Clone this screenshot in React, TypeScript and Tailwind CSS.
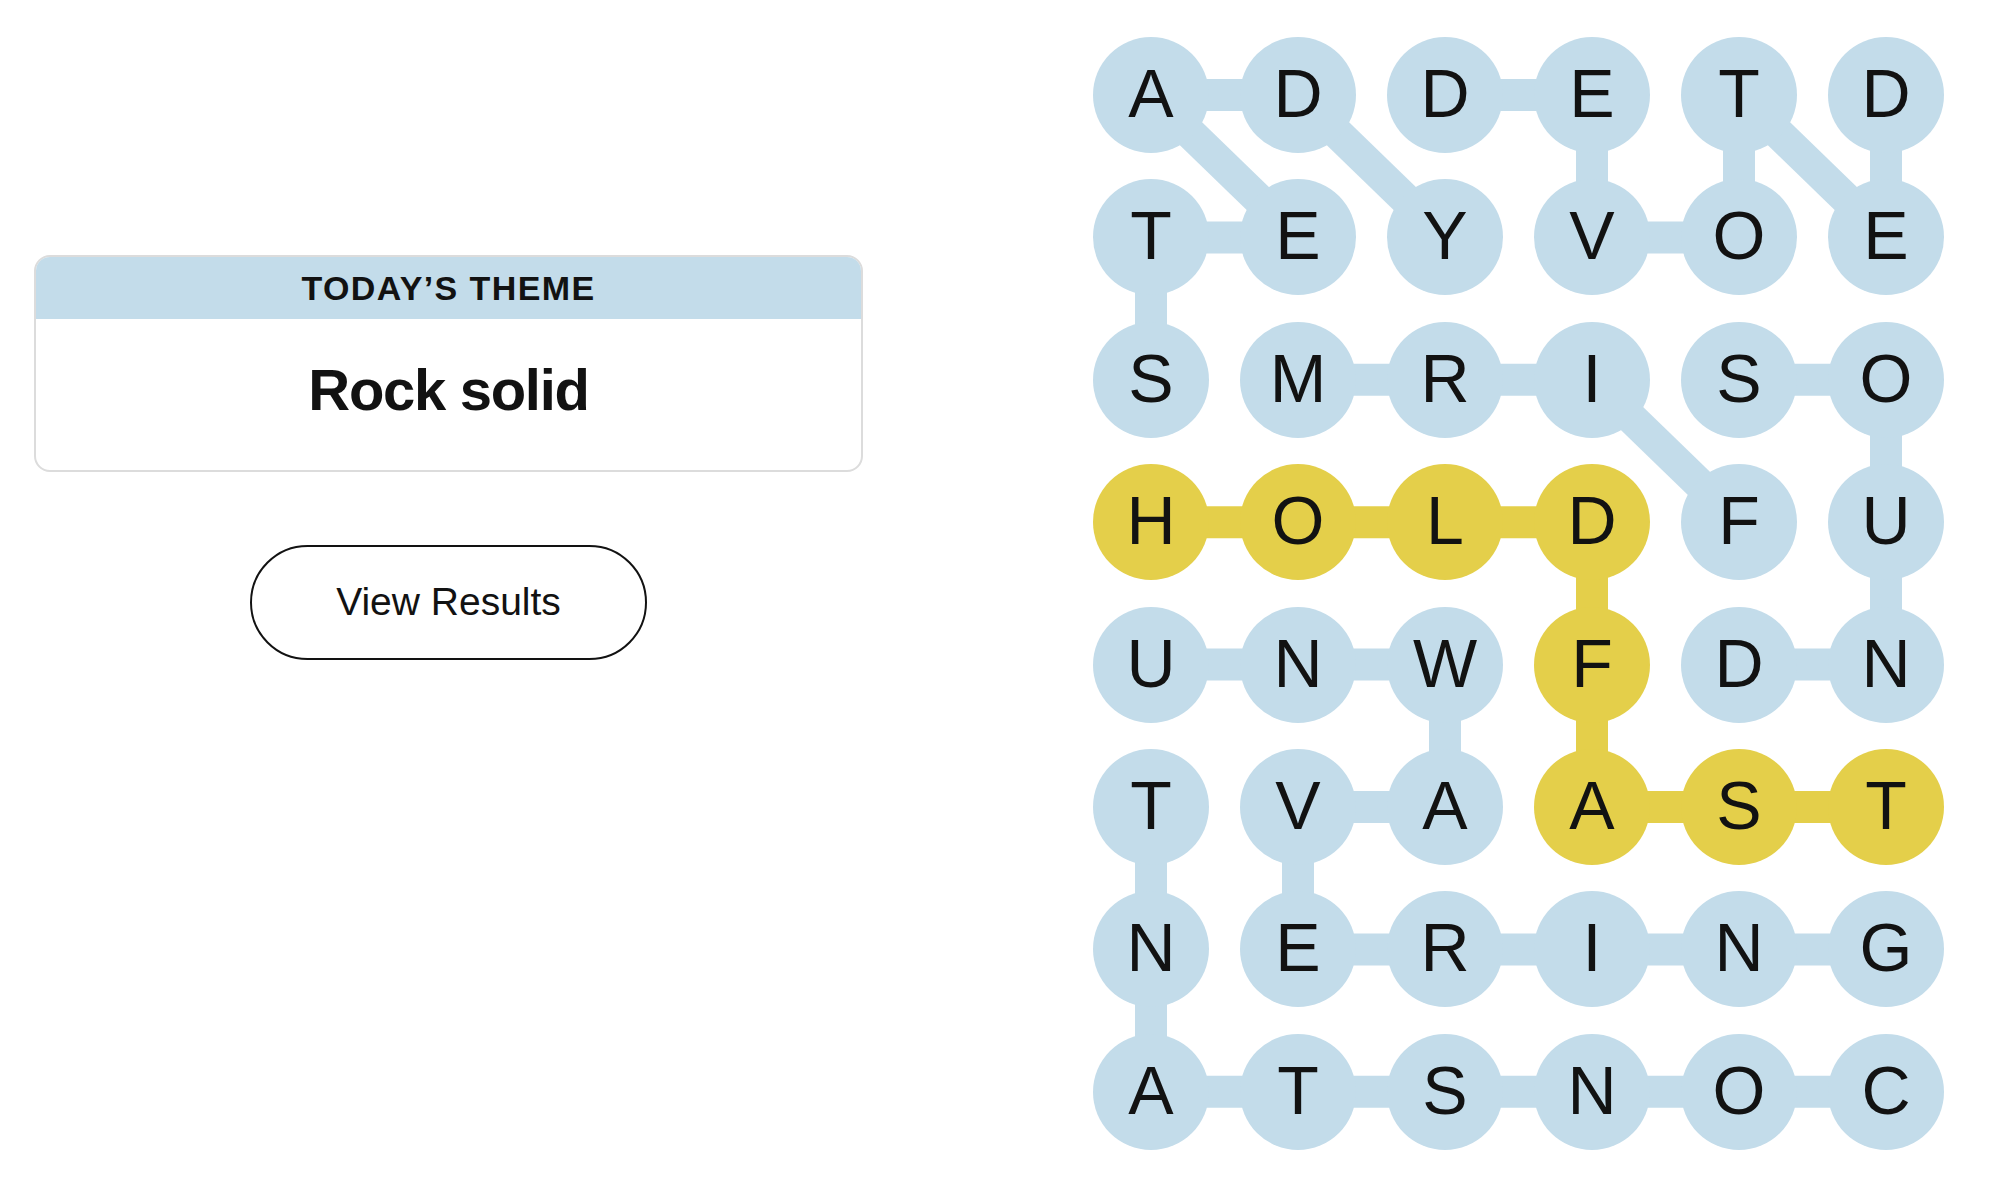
import React from 'react';

const ROWS = ['ADDETD', 'TEYVOE', 'SMRISO', 'HOLDFU', 'UNWFDN', 'TVAAST', 'NERING', 'ATSNOC'];

// cells of the spangram
const YELLOW = new Set(['3-0', '3-1', '3-2', '3-3', '4-3', '5-3', '5-4', '5-5']);

// [r1, c1, r2, c2]
const LINKS: number[][] = [
  [0, 0, 0, 1], [0, 0, 1, 1], [1, 0, 1, 1], [0, 1, 1, 2],
  [0, 2, 0, 3], [0, 3, 1, 3], [0, 4, 1, 4], [0, 4, 1, 5], [0, 5, 1, 5], [1, 3, 1, 4],
  [1, 0, 2, 0], [2, 1, 2, 2], [2, 2, 2, 3], [2, 3, 3, 4], [2, 4, 2, 5], [2, 5, 3, 5], [3, 5, 4, 5],
  [3, 0, 3, 1], [3, 1, 3, 2], [3, 2, 3, 3], [3, 3, 4, 3], [4, 3, 5, 3], [5, 3, 5, 4], [5, 4, 5, 5],
  [4, 0, 4, 1], [4, 1, 4, 2], [4, 2, 5, 2], [4, 4, 4, 5], [5, 1, 5, 2],
  [5, 0, 6, 0], [5, 1, 6, 1], [6, 1, 6, 2], [6, 2, 6, 3], [6, 3, 6, 4], [6, 4, 6, 5],
  [6, 0, 7, 0], [7, 0, 7, 1], [7, 1, 7, 2], [7, 2, 7, 3], [7, 3, 7, 4], [7, 4, 7, 5],
];

const CELL = 116;
const PITCH_X = 147;
const PITCH_Y = 142.4;

const cx = (c: number) => c * PITCH_X + CELL / 2;
const cy = (r: number) => r * PITCH_Y + CELL / 2;

const LetterGrid: React.FC = () => {
  return (
    <div className="relative">
      <svg className="absolute inset-0" width={851} height={1113}>
        {LINKS.map(([r1, c1, r2, c2], i) => {
          const yellow = YELLOW.has(`${r1}-${c1}`) && YELLOW.has(`${r2}-${c2}`);
          return (
            <line
              key={i}
              x1={cx(c1)}
              y1={cy(r1)}
              x2={cx(c2)}
              y2={cy(r2)}
              stroke={yellow ? '#e4cf4a' : '#c3dcea'}
              strokeWidth={32}
            />
          );
        })}
      </svg>
      <div className="relative grid grid-cols-[repeat(6,116px)] gap-x-[31px] gap-y-[26.4px]">
        {ROWS.map((row, r) =>
          row.split('').map((ch, c) => (
            <div
              key={`${r}-${c}`}
              className={`w-[116px] h-[116px] rounded-full flex items-center justify-center pb-[4px] text-[68px] leading-none text-[#121212] ${
                YELLOW.has(`${r}-${c}`) ? 'bg-[#e4cf4a]' : 'bg-[#c3dcea]'
              }`}
            >
              {ch}
            </div>
          ))
        )}
      </div>
    </div>
  );
};

const App: React.FC = () => {
  return (
    <div className="w-full h-[1193px] bg-white flex font-['Liberation_Sans',Arial,sans-serif]">
      <div className="pl-[34px] pt-[255px] flex flex-col items-center w-[863px]">
        <div className="w-[829px] rounded-[16px] border-2 border-[#dcdcdc] overflow-hidden">
          <div className="h-[62px] bg-[#c3dcea] flex items-center justify-center">
            <span className="font-bold text-[34px] tracking-[1.4px] text-[#121212] leading-none">
              TODAY’S THEME
            </span>
          </div>
          <div className="h-[151px] pb-[10px] flex items-center justify-center">
            <span className="font-bold text-[58px] tracking-[-1.3px] text-[#121212] leading-none">
              Rock solid
            </span>
          </div>
        </div>
        <button className="mt-[73px] w-[397px] h-[115px] rounded-full border-[2.5px] border-[#121212] bg-white text-[39px] text-[#121212] flex items-center justify-center">
          View Results
        </button>
      </div>
      <div className="ml-auto pr-[56px] pt-[37px]">
        <LetterGrid />
      </div>
    </div>
  );
};

export default App;
